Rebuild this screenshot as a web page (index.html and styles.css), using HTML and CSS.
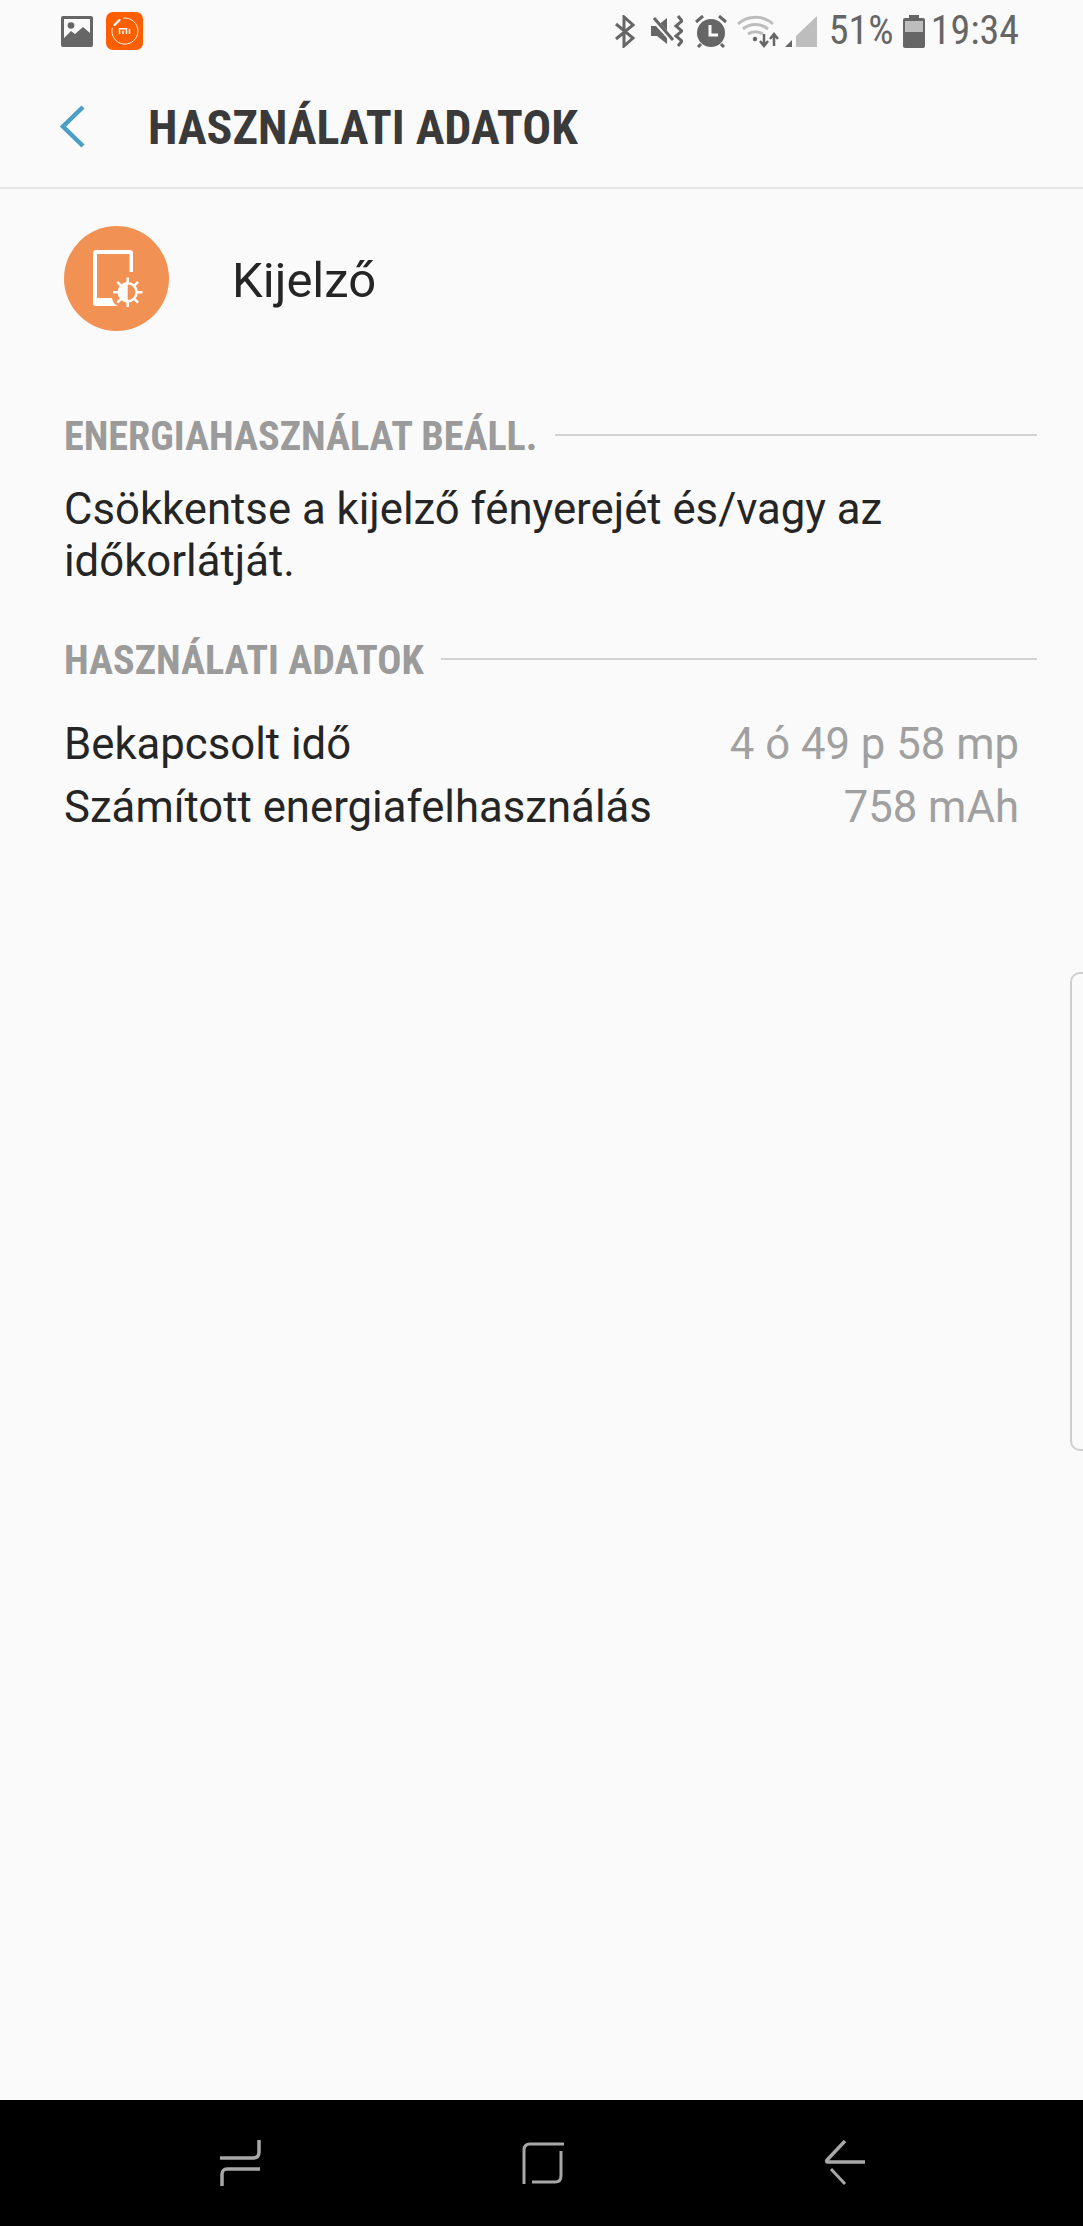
FILE: index.html
```html
<!DOCTYPE html>
<html lang="hu">
<head>
    <meta charset="UTF-8">
    <meta name="viewport" content="width=device-width, initial-scale=1.0">
    <title>Használati adatok</title>
    <link rel="stylesheet" href="styles.css">
</head>
<body>
    <div class="screen">
        <div class="statusbar">
            <div class="status-left">
                <svg class="ic-image" width="32" height="31" viewBox="0 0 32 31">
                    <rect width="32" height="31" rx="2" fill="#666"/>
                    <rect x="3" y="3" width="26" height="21" fill="#fafafa"/>
                    <circle cx="10" cy="9.500" r="3.300" fill="#666"/>
                    <path d="M3 22 L10 15 L14 18 L22 11 L29 17 V29 H3 Z" fill="#666"/>
                </svg>
                <svg class="ic-mi" width="37" height="38" viewBox="0 0 37 38">
                    <rect width="37" height="38" rx="7" fill="#ff5f00"/>
                    <path d="M17 6.200 A13 13 0 1 1 6.300 16" fill="none" stroke="#fff" stroke-width="0.900"/>
                    <path d="M8.500 13 L13.500 8" stroke="#fff" stroke-width="2.200" stroke-linecap="round"/>
                    <path d="M13.500 22 V16.800 H20.500 V22 M17 18.800 V22 M23.500 16.800 V22" fill="none" stroke="#fff" stroke-width="1.500"/>
                </svg>
            </div>
            <div class="status-right">
                <svg class="ic-bt" width="22" height="33" viewBox="0 0 22 33">
                    <path d="M2 9 L19 23 L10 31 V2 L19 10 L2 24" fill="none" stroke="#666" stroke-width="3"/>
                </svg>
                <svg class="ic-mute" width="32" height="32" viewBox="0 0 32 32">
                    <path d="M0 11 H6 L16 3 V29 L6 21 H0 Z" fill="#666"/>
                    <path d="M2 4 L23 27" stroke="#fafafa" stroke-width="5"/>
                    <path d="M3 3 L22 25" stroke="#666" stroke-width="3"/>
                    <path d="M27 1 L31 6 L25 11 L31 16 L25 21 L31 26 L27 31" fill="none" stroke="#666" stroke-width="3"/>
                </svg>
                <svg class="ic-alarm" width="32" height="33" viewBox="0 0 32 33">
                    <circle cx="16" cy="18" r="14" fill="#666"/>
                    <path d="M1 7 L8 1 M31 7 L24 1 M6 29 L3 32 M26 29 L29 32" stroke="#666" stroke-width="3"/>
                    <path d="M15 10 V20 H23" fill="none" stroke="#fafafa" stroke-width="3"/>
                </svg>
                <svg class="ic-wifi" width="44" height="33" viewBox="0 0 44 33">
                    <path d="M1 9 C11 0 26 0 36 9 M6 14 C13 8 24 8 31 14 M11 19 C15 16 22 16 26 19" fill="none" stroke="#bdbdbd" stroke-width="3"/>
                    <circle cx="18" cy="24" r="2.200" fill="#666"/>
                    <path d="M27 19 V30 M23 26 L27 31 L31 26" fill="none" stroke="#666" stroke-width="2.500"/>
                    <path d="M37 31 V20 M33 24 L37 19 L41 24" fill="none" stroke="#666" stroke-width="2.500"/>
                </svg>
                <svg class="ic-signal" width="32" height="32" viewBox="0 0 32 32">
                    <path d="M0 32 L7 25 V32 Z" fill="#666"/>
                    <path d="M11 32 V21 L32 1 V32 Z" fill="#bdbdbd"/>
                </svg>
                <span class="pct">51%</span>
                <svg class="ic-battery" width="22" height="33" viewBox="0 0 22 33">
                    <rect x="6" y="0" width="10" height="4" fill="#666"/>
                    <rect y="3" width="22" height="30" rx="2" fill="#666"/>
                    <rect x="2" y="6" width="18" height="11" fill="#bdbdbd"/>
                </svg>
                <span class="clock">19:34</span>
            </div>
        </div>

        <div class="appbar">
            <svg class="back" width="25" height="43" viewBox="0 0 25 43">
                <path d="M23 2 L3 21.500 L23 41" fill="none" stroke="#4a9fc4" stroke-width="4.500"/>
            </svg>
            <h1 class="title">HASZNÁLATI ADATOK</h1>
        </div>

        <div class="content">
            <div class="app-row">
                <div class="app-icon">
                    <svg width="105" height="105" viewBox="0 0 105 105">
                        <path d="M29 27 Q29 24 32 24 H66 Q69 24 69 27 V46 H65.500 V28 H33 V72 H48 Q49 78 54 80 H32 Q29 80 29 77 Z" fill="#fff"/>
                        <circle cx="63.700" cy="66.300" r="9" fill="none" stroke="#fff" stroke-width="2.500"/>
                        <path d="M63.700 57.300 A9 9 0 0 0 63.700 75.300 Z" fill="#fff"/>
                        <path d="M63.700 51.500 V57 M63.700 75.500 V81 M49 66.300 H54.500 M73 66.300 H78.500 M53.300 55.900 L57 59.600 M70.400 73 L74.100 76.700 M53.300 76.700 L57 73 M70.400 59.600 L74.100 55.900" stroke="#fff" stroke-width="2.500"/>
                    </svg>
                </div>
                <span class="app-name">Kijelző</span>
            </div>

            <div class="section-head energy">
                <span class="section-title">ENERGIAHASZNÁLAT BEÁLL.</span>
                <span class="section-line"></span>
            </div>
            <p class="tip">Csökkentse a kijelző fényerejét és/vagy az időkorlátját.</p>

            <div class="section-head usage">
                <span class="section-title">HASZNÁLATI ADATOK</span>
                <span class="section-line"></span>
            </div>
            <div class="data-row first">
                <span>Bekapcsolt idő</span>
                <span class="value">4 ó 49 p 58 mp</span>
            </div>
            <div class="data-row">
                <span>Számított energiafelhasználás</span>
                <span class="value">758 mAh</span>
            </div>
        </div>

        <div class="edge-handle"></div>

        <div class="navbar">
            <svg width="42" height="46" viewBox="0 0 42 46">
                <path d="M0 18 H33 C37 18 39 16 39 12 V0" fill="none" stroke="#a8a8a8" stroke-width="3.500"/>
                <path d="M40 29 H7 C4 29 2 31 2 34 V46" fill="none" stroke="#a8a8a8" stroke-width="3.500"/>
            </svg>
            <svg width="42" height="44" viewBox="0 0 42 44">
                <path d="M2 43 V9 C2 5 4 3 8 3 H42" fill="none" stroke="#a8a8a8" stroke-width="3"/>
                <path d="M39 10 V35 C39 39 37 41 33 41 H10" fill="none" stroke="#a8a8a8" stroke-width="3"/>
            </svg>
            <svg width="42" height="46" viewBox="0 0 42 46">
                <path d="M21 1 L3 20 C2 22 3 22 5 22 H41" fill="none" stroke="#a8a8a8" stroke-width="3.500"/>
                <path d="M7 29 L21 44" fill="none" stroke="#a8a8a8" stroke-width="3"/>
            </svg>
        </div>
    </div>
</body>
</html>
```

FILE: styles.css
```css
* {
    box-sizing: border-box;
}
body {
    margin: 0;
    background-color: #fafafa;
    font-family: Roboto, "Liberation Sans", sans-serif;
}
.screen {
    position: relative;
    display: flex;
    flex-direction: column;
    height: 2226px;
    overflow: hidden;
    background-color: #fafafa;
}
.statusbar {
    display: flex;
    justify-content: space-between;
    align-items: center;
    height: 62px;
    padding: 0 64px 0 61px;
}
.status-left,
.status-right {
    display: flex;
    align-items: center;
}
.status-left {
    gap: 13px;
}
.status-right {
    color: #666;
    font-size: 40px;
    font-stretch: 75%;
    line-height: 40px;
}
.ic-mute {
    margin-left: 15px;
}
.ic-alarm {
    margin-left: 12px;
}
.ic-wifi {
    margin-left: 10px;
}
.ic-signal {
    margin-left: 4px;
}
.pct {
    margin-left: 12px;
}
.ic-battery {
    margin-left: 9px;
}
.clock {
    margin-left: 6px;
}
.appbar {
    display: flex;
    align-items: center;
    height: 127px;
    padding-left: 60px;
    border-bottom: 2px solid #e5e5e5;
}
.back {
    margin-top: 3px;
}
.title {
    margin: 0 0 0 63px;
    padding-top: 5px;
    color: #3a3a3a;
    font-size: 48px;
    font-weight: 700;
    font-stretch: 75%;
    white-space: nowrap;
}
.content {
    flex: 1;
    padding: 0 46px 0 64px;
}
.app-row {
    display: flex;
    align-items: center;
    height: 105px;
    margin-top: 37px;
}
.app-icon {
    width: 105px;
    height: 105px;
    border-radius: 50%;
    background-color: #f19153;
}
.app-name {
    margin-left: 63px;
    padding-top: 4px;
    color: #252525;
    font-size: 49px;
}
.section-head {
    display: flex;
    align-items: center;
    gap: 17px;
    height: 48px;
}
.section-head.energy {
    margin-top: 82px;
}
.section-head.usage {
    margin-top: 50px;
}
.section-title {
    color: #9b9b9b;
    font-size: 40.200px;
    line-height: 48px;
    font-weight: 700;
    font-stretch: 75%;
    white-space: nowrap;
}
.section-line {
    flex: 1;
    height: 2px;
    margin-bottom: 4px;
    background-color: #d2d2d2;
}
.tip {
    margin: 22px 0 0 0;
    color: #252525;
    font-size: 43.700px;
    line-height: 52px;
}
.data-row {
    display: flex;
    justify-content: space-between;
    align-items: center;
    height: 63px;
    padding-right: 18px;
    color: #252525;
    font-size: 43.700px;
}
.data-row.first {
    margin-top: 27px;
}
.value {
    color: #a0a0a0;
}
.edge-handle {
    position: absolute;
    top: 972px;
    right: 0;
    width: 13px;
    height: 479px;
    border: 2px solid #cfcfcf;
    border-right: none;
    border-radius: 10px 0 0 10px;
}
.navbar {
    display: flex;
    justify-content: space-between;
    align-items: center;
    height: 126px;
    padding: 0 217px 0 220px;
    background-color: #000;
}
```
